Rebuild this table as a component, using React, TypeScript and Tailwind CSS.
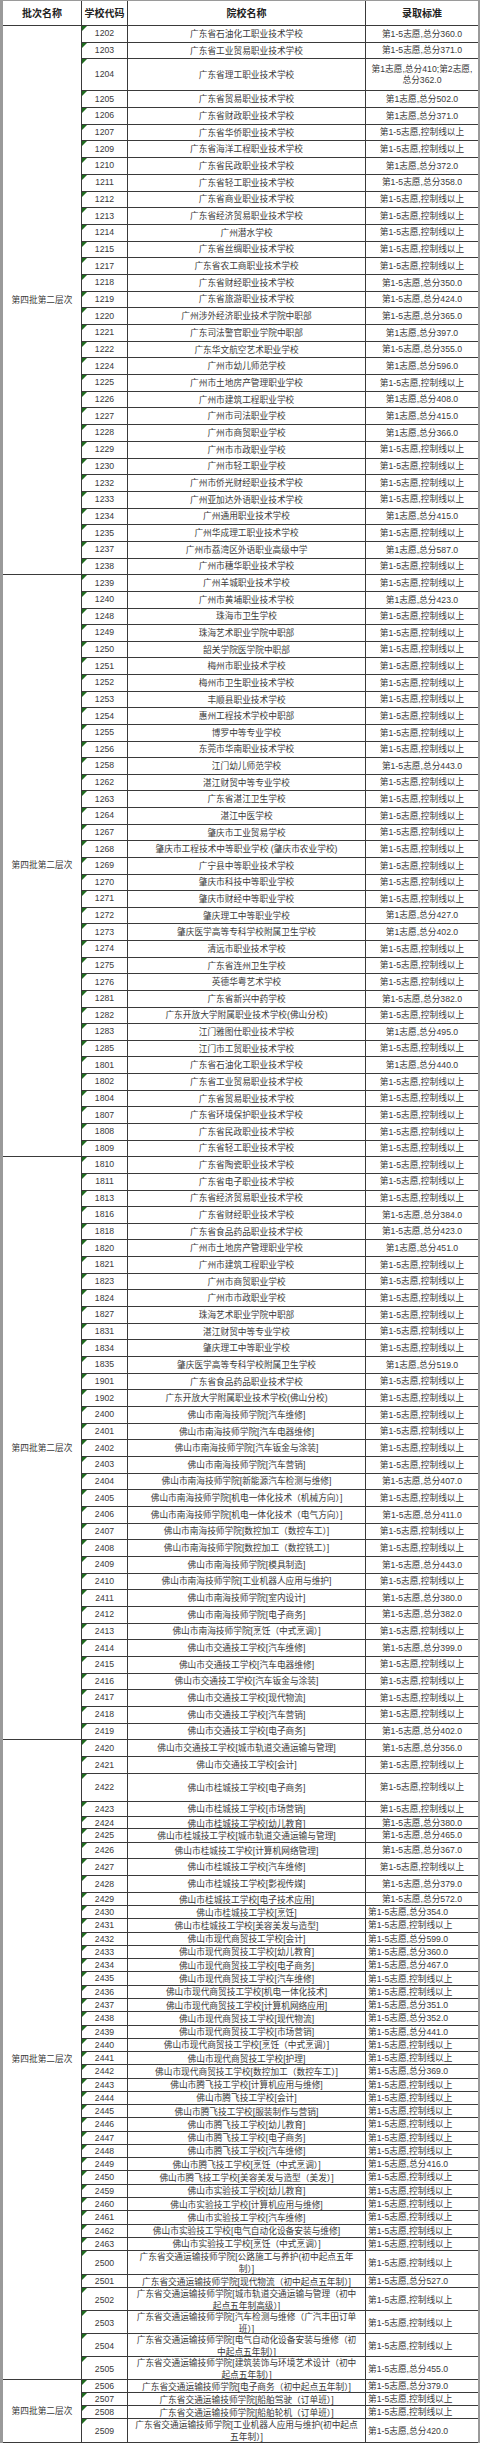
import React from "react";

type R = [string, string, string, number?, boolean?];

const A = "第1-5志愿,控制线以上";

const g1: R[] = [
  ["1202", "广东省石油化工职业技术学校", "第1-5志愿,总分360.0"],
  ["1203", "广东省工业贸易职业技术学校", "第1-5志愿,总分371.0"],
  ["1204", "广东省理工职业技术学校", "第1志愿,总分410;第2志愿,\n总分362.0", 32],
  ["1205", "广东省贸易职业技术学校", "第1志愿,总分502.0"],
  ["1206", "广东省财政职业技术学校", "第1志愿,总分371.0"],
  ["1207", "广东省华侨职业技术学校", A],
  ["1209", "广东省海洋工程职业技术学校", A],
  ["1210", "广东省民政职业技术学校", "第1志愿,总分372.0"],
  ["1211", "广东省轻工职业技术学校", "第1-5志愿,总分358.0"],
  ["1212", "广东省商业职业技术学校", A],
  ["1213", "广东省经济贸易职业技术学校", A],
  ["1214", "广州潜水学校", A],
  ["1215", "广东省丝绸职业技术学校", A],
  ["1217", "广东省农工商职业技术学校", A],
  ["1218", "广东省财经职业技术学校", "第1-5志愿,总分350.0"],
  ["1219", "广东省旅游职业技术学校", "第1-5志愿,总分424.0"],
  ["1220", "广州涉外经济职业技术学院中职部", "第1-5志愿,总分365.0"],
  ["1221", "广东司法警官职业学院中职部", "第1志愿,总分397.0"],
  ["1222", "广东华文航空艺术职业学校", "第1-5志愿,总分355.0"],
  ["1224", "广州市幼儿师范学校", "第1志愿,总分596.0"],
  ["1225", "广州市土地房产管理职业学校", A],
  ["1226", "广州市建筑工程职业学校", "第1志愿,总分408.0"],
  ["1227", "广州市司法职业学校", "第1志愿,总分415.0"],
  ["1228", "广州市商贸职业学校", "第1志愿,总分366.0"],
  ["1229", "广州市市政职业学校", A],
  ["1230", "广州市轻工职业学校", A],
  ["1232", "广州市侨光财经职业技术学校", A],
  ["1233", "广州亚加达外语职业技术学校", A],
  ["1234", "广州通用职业技术学校", "第1志愿,总分415.0"],
  ["1235", "广州华成理工职业技术学校", A],
  ["1237", "广州市荔湾区外语职业高级中学", "第1志愿,总分587.0"],
  ["1238", "广州市穗华职业技术学校", A],
];

const g2: R[] = [
  ["1239", "广州羊城职业技术学校", A],
  ["1240", "广州市黄埔职业技术学校", "第1志愿,总分423.0"],
  ["1248", "珠海市卫生学校", A],
  ["1249", "珠海艺术职业学院中职部", A],
  ["1250", "韶关学院医学院中职部", A],
  ["1251", "梅州市职业技术学校", A],
  ["1252", "梅州市卫生职业技术学校", A],
  ["1253", "丰顺县职业技术学校", A],
  ["1254", "惠州工程技术学校中职部", A],
  ["1255", "博罗中等专业学校", A],
  ["1256", "东莞市华南职业技术学校", A],
  ["1258", "江门幼儿师范学校", "第1-5志愿,总分443.0"],
  ["1262", "湛江财贸中等专业学校", A],
  ["1263", "广东省湛江卫生学校", A],
  ["1264", "湛江中医学校", A],
  ["1267", "肇庆市工业贸易学校", A],
  ["1268", "肇庆市工程技术中等职业学校 (肇庆市农业学校)", A],
  ["1269", "广宁县中等职业技术学校", A],
  ["1270", "肇庆市科技中等职业学校", A],
  ["1271", "肇庆市财经中等职业学校", A],
  ["1272", "肇庆理工中等职业学校", "第1志愿,总分427.0"],
  ["1273", "肇庆医学高等专科学校附属卫生学校", "第1志愿,总分402.0"],
  ["1274", "清远市职业技术学校", A],
  ["1275", "广东省连州卫生学校", A],
  ["1276", "英德华粤艺术学校", A],
  ["1281", "广东省新兴中药学校", "第1-5志愿,总分382.0"],
  ["1282", "广东开放大学附属职业技术学校(佛山分校)", A],
  ["1283", "江门雅图仕职业技术学校", "第1志愿,总分495.0"],
  ["1285", "江门市工贸职业技术学校", A],
  ["1801", "广东省石油化工职业技术学校", "第1志愿,总分440.0"],
  ["1802", "广东省工业贸易职业技术学校", A],
  ["1804", "广东省贸易职业技术学校", A],
  ["1807", "广东省环境保护职业技术学校", A],
  ["1808", "广东省民政职业技术学校", A],
  ["1809", "广东省轻工职业技术学校", A],
];

const g3: R[] = [
  ["1810", "广东省陶瓷职业技术学校", A],
  ["1811", "广东省电子职业技术学校", A],
  ["1813", "广东省经济贸易职业技术学校", A],
  ["1816", "广东省财经职业技术学校", "第1-5志愿,总分384.0"],
  ["1818", "广东省食品药品职业技术学校", "第1-5志愿,总分423.0"],
  ["1820", "广州市土地房产管理职业学校", "第1志愿,总分451.0"],
  ["1821", "广州市建筑工程职业学校", A],
  ["1823", "广州市商贸职业学校", A],
  ["1824", "广州市市政职业学校", A],
  ["1827", "珠海艺术职业学院中职部", A],
  ["1831", "湛江财贸中等专业学校", A],
  ["1834", "肇庆理工中等职业学校", A],
  ["1835", "肇庆医学高等专科学校附属卫生学校", "第1志愿,总分519.0"],
  ["1901", "广东省食品药品职业技术学校", A],
  ["1902", "广东开放大学附属职业技术学校(佛山分校)", A],
  ["2400", "佛山市南海技师学院[汽车维修]", A],
  ["2401", "佛山市南海技师学院[汽车电器维修]", A],
  ["2402", "佛山市南海技师学院[汽车钣金与涂装]", A],
  ["2403", "佛山市南海技师学院[汽车营销]", A],
  ["2404", "佛山市南海技师学院[新能源汽车检测与维修]", "第1-5志愿,总分407.0"],
  ["2405", "佛山市南海技师学院[机电一体化技术（机械方向）]", A],
  ["2406", "佛山市南海技师学院[机电一体化技术（电气方向）]", "第1-5志愿,总分411.0"],
  ["2407", "佛山市南海技师学院[数控加工（数控车工）]", A],
  ["2408", "佛山市南海技师学院[数控加工（数控铣工）]", A],
  ["2409", "佛山市南海技师学院[模具制造]", "第1-5志愿,总分443.0"],
  ["2410", "佛山市南海技师学院[工业机器人应用与维护]", A],
  ["2411", "佛山市南海技师学院[室内设计]", "第1-5志愿,总分380.0"],
  ["2412", "佛山市南海技师学院[电子商务]", "第1-5志愿,总分382.0"],
  ["2413", "佛山市南海技师学院[烹饪（中式烹调）]", A],
  ["2414", "佛山市交通技工学校[汽车维修]", "第1-5志愿,总分399.0"],
  ["2415", "佛山市交通技工学校[汽车电器维修]", A],
  ["2416", "佛山市交通技工学校[汽车钣金与涂装]", A],
  ["2417", "佛山市交通技工学校[现代物流]", A],
  ["2418", "佛山市交通技工学校[汽车营销]", A],
  ["2419", "佛山市交通技工学校[电子商务]", "第1-5志愿,总分402.0"],
];

const S = 13.27;
const g4: R[] = [
  ["2420", "佛山市交通技工学校[城市轨道交通运输与管理]", "第1-5志愿,总分356.0", 17],
  ["2421", "佛山市交通技工学校[会计]", A, 17],
  ["2422", "佛山市桂城技工学校[电子商务]", A, 28],
  ["2423", "佛山市桂城技工学校[市场营销]", A, 15],
  ["2424", "佛山市桂城技工学校[幼儿教育]", "第1-5志愿,总分380.0", 12],
  ["2425", "佛山市桂城技工学校[城市轨道交通运输与管理]", "第1-5志愿,总分465.0", 14],
  ["2426", "佛山市桂城技工学校[计算机网络管理]", "第1-5志愿,总分367.0", 16],
  ["2427", "佛山市桂城技工学校[汽车维修]", A, 17],
  ["2428", "佛山市桂城技工学校[影视传媒]", "第1-5志愿,总分379.0", 17],
  ["2429", "佛山市桂城技工学校[电子技术应用]", "第1-5志愿,总分572.0", 13],
  ["2430", "佛山市桂城技工学校[烹饪]", "第1-5志愿,总分354.0", S, true],
  ["2431", "佛山市桂城技工学校[美容美发与造型]", A, S, true],
  ["2432", "佛山市现代商贸技工学校[会计]", "第1-5志愿,总分599.0", S, true],
  ["2433", "佛山市现代商贸技工学校[幼儿教育]", "第1-5志愿,总分360.0", S, true],
  ["2434", "佛山市现代商贸技工学校[电子商务]", "第1-5志愿,总分467.0", S, true],
  ["2435", "佛山市现代商贸技工学校[汽车维修]", A, S, true],
  ["2436", "佛山市现代商贸技工学校[机电一体化技术]", A, S, true],
  ["2437", "佛山市现代商贸技工学校[计算机网络应用]", "第1-5志愿,总分351.0", S, true],
  ["2438", "佛山市现代商贸技工学校[现代物流]", "第1-5志愿,总分352.0", S, true],
  ["2439", "佛山市现代商贸技工学校[市场营销]", "第1-5志愿,总分441.0", S, true],
  ["2440", "佛山市现代商贸技工学校[烹饪（中式烹调）]", A, S, true],
  ["2441", "佛山市现代商贸技工学校[护理]", A, S, true],
  ["2442", "佛山市现代商贸技工学校[数控加工（数控车工）]", "第1-5志愿,总分369.0", S, true],
  ["2443", "佛山市腾飞技工学校[计算机应用与维修]", A, S, true],
  ["2444", "佛山市腾飞技工学校[会计]", A, S, true],
  ["2445", "佛山市腾飞技工学校[服装制作与营销]", A, S, true],
  ["2446", "佛山市腾飞技工学校[幼儿教育]", A, S, true],
  ["2447", "佛山市腾飞技工学校[电子商务]", A, S, true],
  ["2448", "佛山市腾飞技工学校[汽车维修]", A, S, true],
  ["2449", "佛山市腾飞技工学校[烹饪（中式烹调）]", "第1-5志愿,总分416.0", S, true],
  ["2450", "佛山市腾飞技工学校[美容美发与造型（美发）]", A, S, true],
  ["2459", "佛山市实验技工学校[幼儿教育]", A, S, true],
  ["2460", "佛山市实验技工学校[计算机应用与维修]", A, S, true],
  ["2461", "佛山市实验技工学校[汽车维修]", A, S, true],
  ["2462", "佛山市实验技工学校[电气自动化设备安装与维修]", A, S, true],
  ["2463", "佛山市实验技工学校[烹饪（中式烹调）]", A, S, true],
  ["2500", "广东省交通运输技师学院[公路施工与养护(初中起点五年\n制）]", A, 24, true],
  ["2501", "广东省交通运输技师学院[现代物流（初中起点五年制）]", "第1-5志愿,总分527.0", 13, true],
  ["2502", "广东省交通运输技师学院[城市轨道交通运输与管理（初中\n起点五年制高级）]", A, 23, true],
  ["2503", "广东省交通运输技师学院[汽车检测与维修（广汽丰田订单\n班）]", A, 23, true],
  ["2504", "广东省交通运输技师学院[电气自动化设备安装与维修（初\n中起点五年制）]", A, 23, true],
  ["2505", "广东省交通运输技师学院[建筑装饰与环境艺术设计（初中\n起点五年制）]", "第1-5志愿,总分455.0", 23, true],
];

const g5: R[] = [
  ["2506", "广东省交通运输技师学院[电子商务（初中起点五年制）]", "第1-5志愿,总分379.0", 13, true],
  ["2507", "广东省交通运输技师学院[船舶驾驶（订单班）]", A, 13, true],
  ["2508", "广东省交通运输技师学院[船舶轮机（订单班）]", A, 13, true],
  ["2509", "广东省交通运输技师学院[工业机器人应用与维护(初中起点\n五年制）]", "第1-5志愿,总分420.0", 24, true],
];

function Row({ r, h }: { r: R; h: number }) {
  const [code, name, crit, hh, left] = r;
  return (
    <div
      className="grid grid-cols-[46px_238px_1fr] border-b border-[#3a3a3a] overflow-visible"
      style={{ height: hh ?? h }}
    >
      <div className="relative flex items-center justify-center border-r border-[#3a3a3a]">
        <span className="absolute left-0 top-0 h-0 w-0 border-t-[5px] border-r-[5px] border-t-[#1f6b1f] border-r-transparent" />
        {code}
      </div>
      <div className="flex items-center justify-center text-center whitespace-pre leading-[12px] border-r border-[#3a3a3a]">
        {name}
      </div>
      <div
        className={
          left
            ? "flex items-center justify-start pl-[2px] whitespace-pre leading-[11px]"
            : "flex items-center justify-center text-center whitespace-pre leading-[10.5px]"
        }
      >
        {crit}
      </div>
    </div>
  );
}

function Group({ rows, h }: { rows: R[]; h: number }) {
  return (
    <div className="flex">
      <div className="w-[79px] shrink-0 flex items-center justify-center border-r border-b border-[#3a3a3a]">
        第四批第二层次
      </div>
      <div className="flex-1 flex flex-col">
        {rows.map((r) => (
          <Row key={r[0]} r={r} h={h} />
        ))}
      </div>
    </div>
  );
}

export default function App() {
  return (
    <div className="w-[480px] bg-white text-[#3a3a3a] font-['Liberation_Sans','Noto_Sans_CJK_SC',sans-serif] text-[8.7px]">
      <div className="border-l-[3px] border-r-[2px] border-t border-[#9a9a9a]">
        <div className="grid grid-cols-[79px_46px_238px_1fr] h-[25px] border-b border-[#3a3a3a] font-bold text-[10px] text-[#222]">
          <div className="flex items-center justify-center border-r border-[#3a3a3a]">批次名称</div>
          <div className="flex items-center justify-center border-r border-[#3a3a3a]">学校代码</div>
          <div className="flex items-center justify-center border-r border-[#3a3a3a]">院校名称</div>
          <div className="flex items-center justify-center">录取标准</div>
        </div>
        <Group rows={g1} h={16.7} />
        <Group rows={g2} h={16.63} />
        <Group rows={g3} h={16.66} />
        <Group rows={g4} h={13} />
        <Group rows={g5} h={13} />
      </div>
    </div>
  );
}
